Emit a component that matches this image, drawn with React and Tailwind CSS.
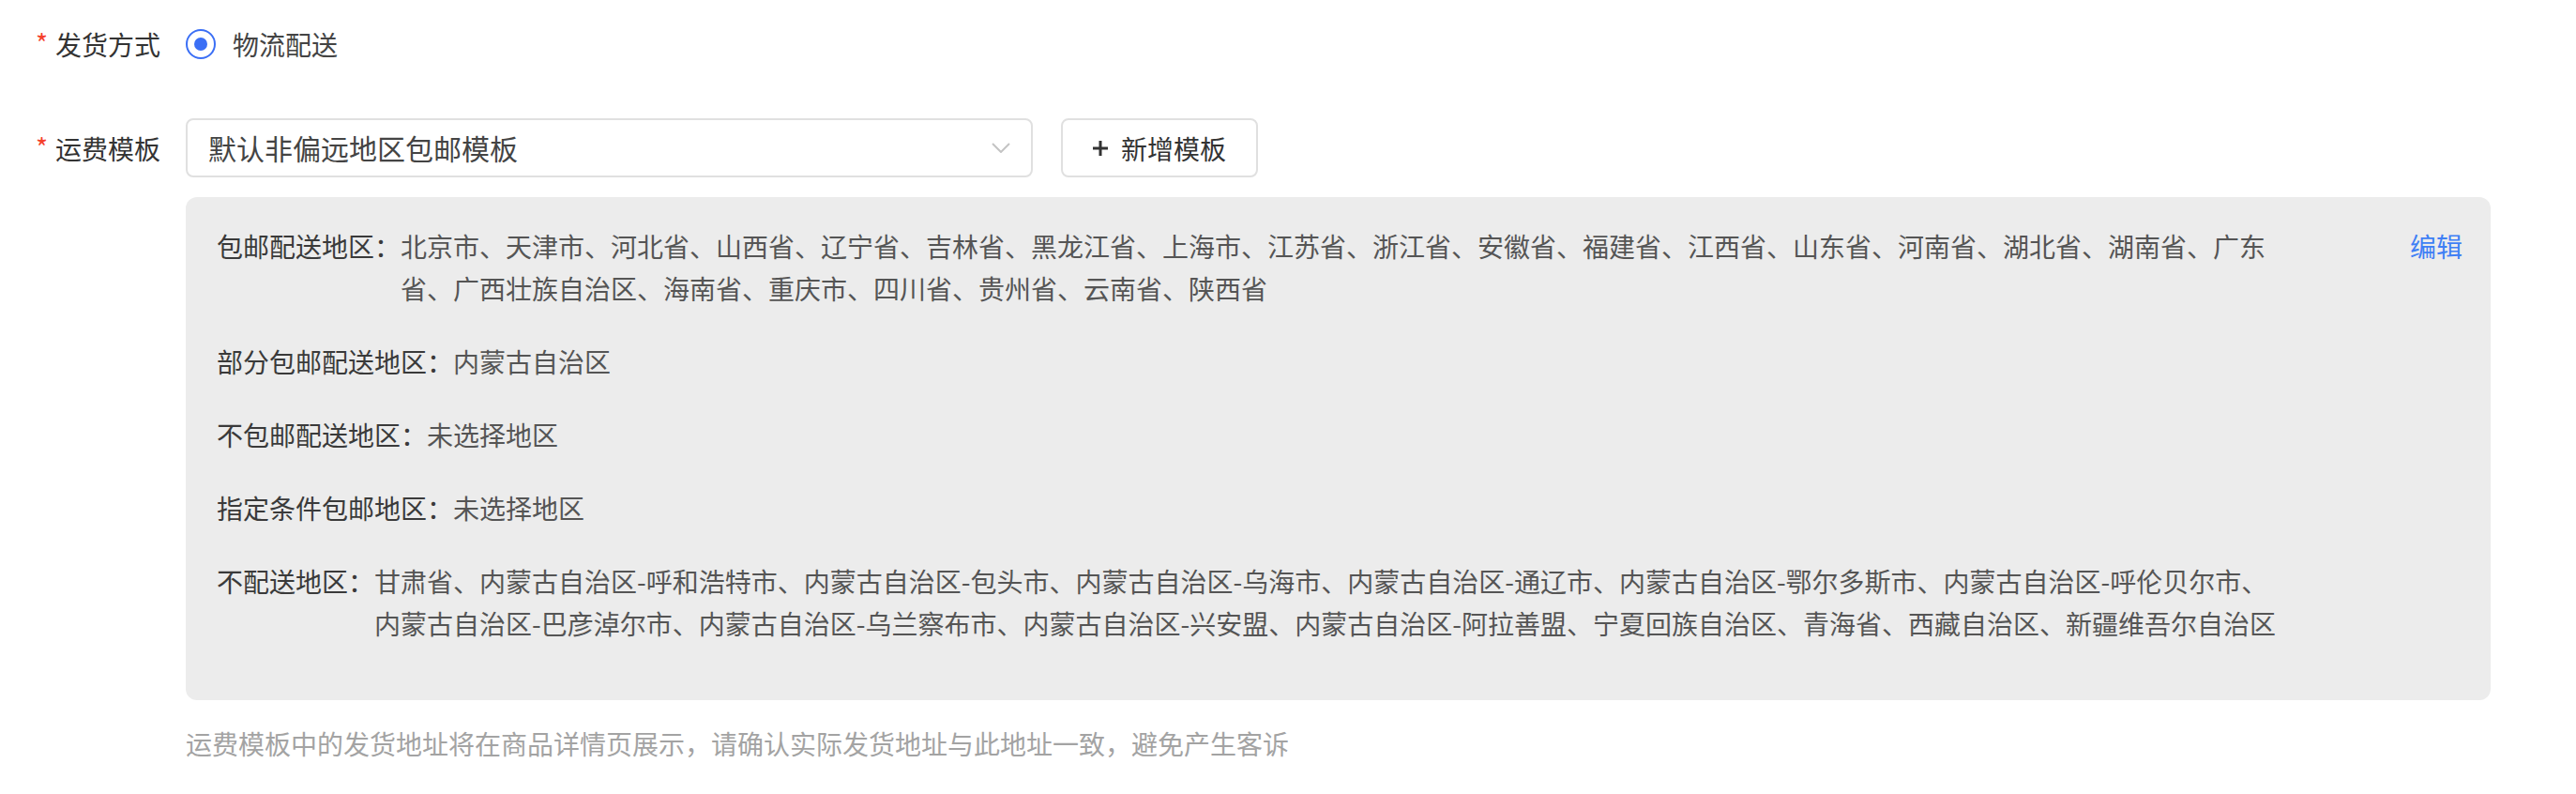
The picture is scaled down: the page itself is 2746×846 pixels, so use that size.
const freeRegions =
  '北京市、天津市、河北省、山西省、辽宁省、吉林省、黑龙江省、上海市、江苏省、浙江省、安徽省、福建省、江西省、山东省、河南省、湖北省、湖南省、广东省、广西壮族自治区、海南省、重庆市、四川省、贵州省、云南省、陕西省';

const blockedRegions =
  '甘肃省、内蒙古自治区-呼和浩特市、内蒙古自治区-包头市、内蒙古自治区-乌海市、内蒙古自治区-通辽市、内蒙古自治区-鄂尔多斯市、内蒙古自治区-呼伦贝尔市、内蒙古自治区-巴彦淖尔市、内蒙古自治区-乌兰察布市、内蒙古自治区-兴安盟、内蒙古自治区-阿拉善盟、宁夏回族自治区、青海省、西藏自治区、新疆维吾尔自治区';

const rows = [
  { label: '包邮配送地区：', value: freeRegions },
  { label: '部分包邮配送地区：', value: '内蒙古自治区' },
  { label: '不包邮配送地区：', value: '未选择地区' },
  { label: '指定条件包邮地区：', value: '未选择地区' },
  { label: '不配送地区：', value: blockedRegions },
];

// label column: right aligned, asterisk in front
const FieldLabel = ({ children, className = '' }) => (
  <div className={`w-[198px] shrink-0 flex items-center justify-end pr-[27px] whitespace-nowrap text-[#333] ${className}`}>
    <span className="text-[#f5402c] mr-[8px] leading-[28px] -mt-[4px]">*</span>
    <span>{children}</span>
  </div>
);

const App = () => {
  return (
    <div className="w-[2746px] h-[846px] bg-white pt-[27px] pr-[91px] text-[28px] font-['Noto_Sans_CJK_SC','Noto_Sans',sans-serif]">
      {/* 发货方式 */}
      <div className="flex h-[40px] leading-[40px]">
        <FieldLabel className="h-[40px]">发货方式</FieldLabel>
        <label className="flex items-center gap-[18px] text-[#444]">
          <span className="w-[32px] h-[32px] rounded-full border-2 border-[#3b6ff5] flex items-center justify-center">
            <span className="w-[14px] h-[14px] rounded-full bg-[#3b6ff5]"></span>
          </span>
          物流配送
        </label>
      </div>

      {/* 运费模板 */}
      <div className="flex mt-[59px]">
        <FieldLabel className="h-[63px]">运费模板</FieldLabel>
        <div className="flex-1">
          <div className="flex gap-[30px]">
            <div className="w-[903px] h-[63px] border-2 border-[#e0e0e0] rounded-[8px] bg-white flex items-center justify-between pl-[22px] pr-[22px]">
              <span className="text-[30px] text-[#444]">默认非偏远地区包邮模板</span>
              <svg width="20" height="11" viewBox="0 0 20 11" fill="none">
                <polyline points="1,1 10,10 19,1" stroke="#c4c4c4" strokeWidth="2" />
              </svg>
            </div>
            <button className="w-[210px] h-[63px] border-2 border-[#e0e0e0] rounded-[8px] bg-white flex items-center justify-center gap-[14px] text-[#333]">
              <svg width="16" height="16" viewBox="0 0 16 16">
                <rect x="6.5" y="0" width="3" height="16" fill="#333" />
                <rect x="0" y="6.5" width="16" height="3" fill="#333" />
              </svg>
              新增模板
            </button>
          </div>

          <div className="mt-[21px] bg-[#ececec] rounded-[12px] pt-[30px] pb-[59px] pl-[33px] pr-[30px] flex leading-[45px]">
            <div className="flex-1 flex flex-col gap-[33px]">
              {rows.map((row) => (
                <div key={row.label} className="flex">
                  <span className="shrink-0 text-[#3a3a3a]">{row.label}</span>
                  <span className="flex-1 text-[#555]">{row.value}</span>
                </div>
              ))}
            </div>
            <a className="ml-[139px] text-[#3f7ff5] shrink-0 cursor-pointer">编辑</a>
          </div>

          <p className="mt-[26px] leading-[40px] text-[#a3a3a3]">
            运费模板中的发货地址将在商品详情页展示，请确认实际发货地址与此地址一致，避免产生客诉
          </p>
        </div>
      </div>
    </div>
  );
};

export default App;
